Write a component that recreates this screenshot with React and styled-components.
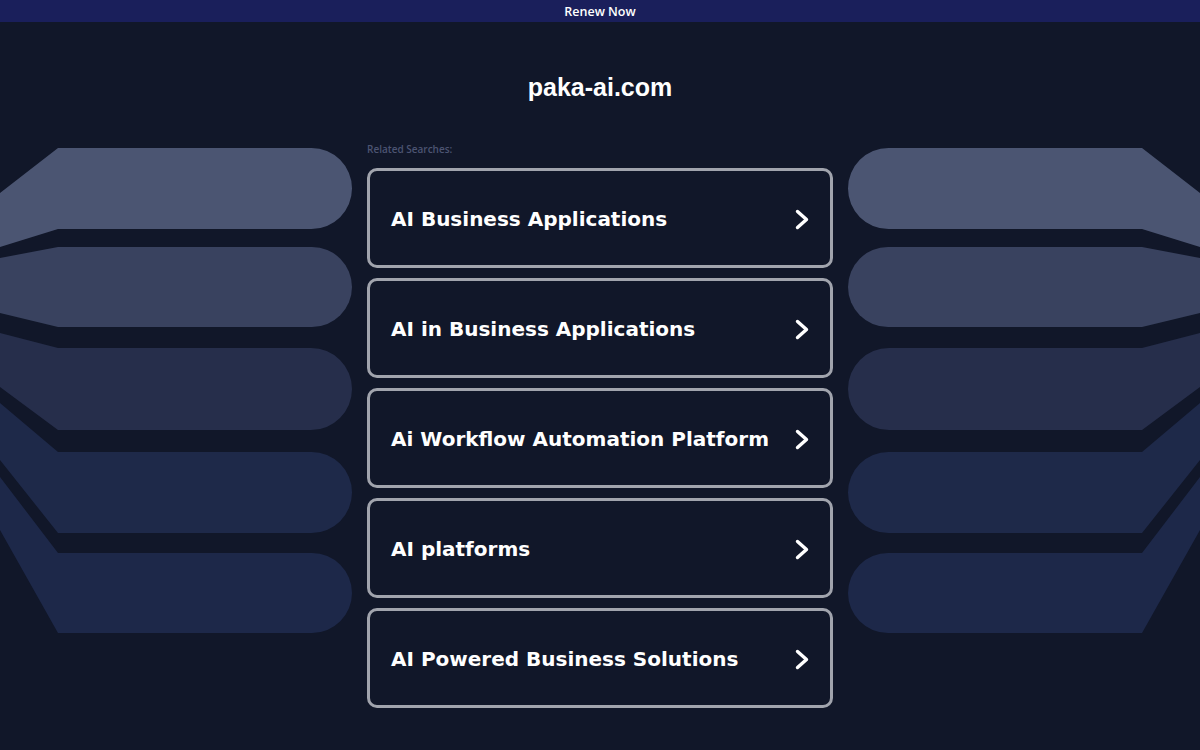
import React from "react";
import styled, { createGlobalStyle } from "styled-components";

const GlobalStyle = createGlobalStyle`
  html, body {
    margin: 0;
    padding: 0;
    background: #111729;
  }
  * {
    box-sizing: border-box;
  }
`;

const Page = styled.div`
  min-height: 750px;
  background: #111729;
  overflow: hidden;
`;

const TopBar = styled.a`
  display: flex;
  align-items: center;
  justify-content: center;
  height: 22px;
  background: #1a1f5b;
  color: #ffffff;
  font-family: "Open Sans", "Liberation Sans", sans-serif;
  font-weight: 600;
  font-size: 12.5px;
  text-decoration: none;
  cursor: pointer;
`;

const Title = styled.h1`
  margin: 0;
  padding-top: 50px;
  height: 118px;
  text-align: center;
  color: #ffffff;
  font-family: "Liberation Sans", Arial, sans-serif;
  font-weight: 700;
  font-size: 25px;
  line-height: 30px;
`;

const Row = styled.div`
  display: flex;
  justify-content: space-between;
  gap: 15px;
`;

const ArtWrap = styled.div`
  flex: 1;
  padding-top: 8px;
  transform: ${(props) => (props.flip ? "scaleX(-1)" : "none")};
`;

const Content = styled.div`
  width: 466px;
  flex-shrink: 0;
`;

const Label = styled.div`
  height: 14px;
  margin-top: 2px;
  margin-bottom: 12px;
  color: #4c5472;
  font-family: "Open Sans", "Liberation Sans", sans-serif;
  font-weight: 600;
  font-size: 10px;
  line-height: 14px;
`;

const List = styled.div`
  display: flex;
  flex-direction: column;
  gap: 10px;
`;

const Card = styled.a`
  display: flex;
  align-items: center;
  justify-content: space-between;
  height: 100px;
  padding: 2px 21px 0 21px;
  border: 3px solid #a1a4ad;
  border-radius: 10px;
  background: #111729;
  color: #ffffff;
  font-family: "DejaVu Sans", Verdana, sans-serif;
  font-weight: 700;
  font-size: 20px;
  text-decoration: none;
  cursor: pointer;
`;

const bands = [
  { color: "#4b5572", top: 0, bottom: 81, lt: 45, lb: 99 },
  { color: "#39425f", top: 99, bottom: 179, lt: 110, lb: 165 },
  { color: "#262e4b", top: 200, bottom: 282, lt: 185, lb: 239 },
  { color: "#1e2949", top: 304, bottom: 385, lt: 255, lb: 312 },
  { color: "#1d2849", top: 405, bottom: 485, lt: 329, lb: 382 },
];

const Art = ({ flip }) => (
  <ArtWrap flip={flip ? 1 : 0}>
    <svg width="352" height="490" viewBox="0 0 352 490">
      {bands.map((b, i) => {
        const r = (b.bottom - b.top) / 2;
        return (
          <path
            key={i}
            fill={b.color}
            d={`M0 ${b.lt} L58 ${b.top} H${352 - r} A${r} ${r} 0 0 1 ${
              352 - r
            } ${b.bottom} H58 L0 ${b.lb} Z`}
          />
        );
      })}
    </svg>
  </ArtWrap>
);

const Chevron = () => (
  <svg width="14" height="21" viewBox="0 0 14 21">
    <polyline
      points="2.5,2.5 11.5,10.5 2.5,18.5"
      fill="none"
      stroke="#ffffff"
      strokeWidth="3.4"
      strokeLinecap="round"
      strokeLinejoin="round"
    />
  </svg>
);

const searches = [
  "AI Business Applications",
  "AI in Business Applications",
  "Ai Workflow Automation Platform",
  "AI platforms",
  "AI Powered Business Solutions",
];

export default function App() {
  return (
    <Page>
      <GlobalStyle />
      <TopBar>Renew Now</TopBar>
      <Title>paka-ai.com</Title>
      <Row>
        <Art />
        <Content>
          <Label>Related Searches:</Label>
          <List>
            {searches.map((s) => (
              <Card key={s}>
                <span>{s}</span>
                <Chevron />
              </Card>
            ))}
          </List>
        </Content>
        <Art flip />
      </Row>
    </Page>
  );
}
